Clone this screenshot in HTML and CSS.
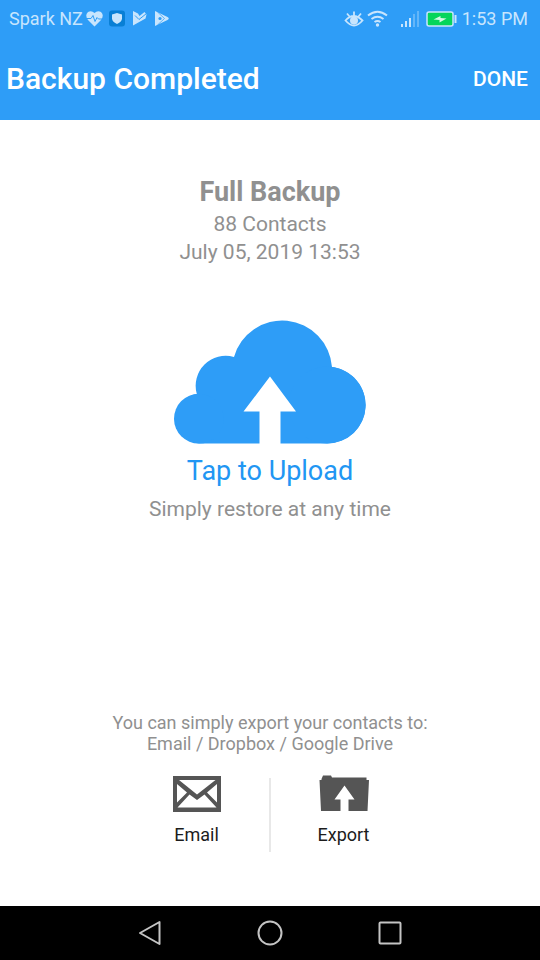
FILE: index.html
```html
<!DOCTYPE html>
<html lang="en">
<head>
<meta charset="utf-8">
<meta name="viewport" content="width=device-width, initial-scale=1">
<title>Backup Completed</title>
<link rel="stylesheet" href="styles.css">
</head>
<body>
<div class="status">
  <div class="status-group">
    <span>Spark NZ</span>
    <svg width="84" height="20" viewBox="85 9 84 20" fill="currentColor" aria-hidden="true">
      <path d="M94.500 26.500 L88 20 Q84.500 15 88 12 Q91.500 10 94.500 13 Q97.500 10 101 12 Q104.500 15 101 20Z"/>
      <path class="pulse" d="M86 18.500h5l2-3 2 6 2-4 1.500 1.500h4"/>
      <rect class="badge" x="109" y="10.500" width="16" height="16" rx="3"/>
      <path d="M117 13l5 1.500v4q0 3-5 5.500q-5-2.500-5-5.500v-4z"/>
      <path d="M133 11l5 2.500 1.500 2.500 5-4 2 2.500-1 4-12.500 7z"/>
      <path class="tick" d="M135 15.500l4 4L146.500 13.500"/>
      <path d="M155 11l12.500 6q2.500 1.500 0 3l-12.500 6z"/>
      <path class="play-cut" d="M157.500 12l7 6.500-7 6.500"/>
      <circle class="play-hole" cx="160" cy="18.500" r="1.600"/>
    </svg>
  </div>
  <div class="status-group">
    <svg width="113" height="22" viewBox="345 7 113 22" fill="none" stroke="currentColor" stroke-width="1.800" aria-hidden="true">
      <path d="M345.500 19.500q8-9 17 0q-8.500 10-17 0zM354 10.500v4M347 12.500l2.500 3M361 12.500l-2.500 3"/>
      <circle cx="354" cy="19.500" r="4" fill="currentColor" stroke="none"/>
      <path stroke-width="2" d="M368 14.500q9.500-7.500 19 0M371.500 18q6-4.500 12 0M374.500 21q3-2 6 0"/>
      <circle cx="377.500" cy="24" r="1.700" fill="currentColor" stroke="none"/>
      <path stroke-width="2" d="M402 26v-3M406 26v-6M410 26v-9"/>
      <path stroke-width="2" opacity=".35" d="M414 26V13M418 26V10"/>
      <rect class="cell" x="427" y="11" width="26" height="14" rx="2" stroke-width="1.500"/>
      <path stroke-width="2" d="M455.500 14v8"/>
      <path class="bolt" d="M433.500 18.500l7-3.500v2l6 .5-7 4v-2.500z"/>
    </svg>
    <span>1:53 PM</span>
  </div>
</div>
<header class="header">
  <h1 class="title">Backup Completed</h1>
  <button class="done" type="button">DONE</button>
</header>
<main class="main">
  <section class="summary">
    <h2 class="name">Full Backup</h2>
    <p>88 Contacts</p>
    <p>July 05, 2019 13:53</p>
  </section>
  <button class="upload" type="button">
    <svg width="192" height="124" viewBox="174 320 192 124" aria-hidden="true">
      <path fill="#2e9df7" d="M199 443.500A24.900 24.900 0 0 1 196.800 394A30 30 0 0 1 234 357A50 50 0 0 1 332 367A38.400 38.400 0 0 1 327 443.500Z"/>
      <circle fill="#2e9df7" cx="198.900" cy="418.700" r="24.900"/>
      <circle fill="#2e9df7" cx="327.100" cy="405" r="38.500"/>
      <path fill="#fff" d="M270 376.500L296 411.500H280.500V444H259.500V411.500H243.500Z"/>
    </svg>
    <span class="upload-label">Tap to Upload</span>
    <span class="upload-note">Simply restore at any time</span>
  </button>
  <section class="share">
    <p>You can simply export your contacts to:<br>Email / Dropbox / Google Drive</p>
    <div class="options">
      <button class="option" type="button">
        <svg width="50" height="40" viewBox="172 774 50 40" aria-hidden="true">
          <path fill="#555" d="M173 776h48v36h-48z"/>
          <path fill="#fff" d="M179 780h36.500l-18.500 14.500zM177 784l10 8.500-10 10zM217 784v18.500l-10-10zM189.500 794.500l7.500 5.500 7.500-5.500 12 13h-39z"/>
        </svg>
        <span>Email</span>
      </button>
      <button class="option" type="button">
        <svg width="50" height="40" viewBox="317 774 50 40" aria-hidden="true">
          <path fill="#555" d="M319.500 779l1.500-3.500h8l1 2h34.500v2.500h2.500l-1.500 31h-46.500l-1.500-31h2z"/>
          <path fill="#fff" d="M342.500 785.500l10 14h-6V811h-8v-11.500h-6z"/>
        </svg>
        <span>Export</span>
      </button>
    </div>
  </section>
</main>
<nav class="nav" aria-label="System">
  <button type="button" aria-label="Back"><svg width="28" height="28" viewBox="0 0 28 28"><path d="M4 14L23.500 3v22z"/></svg></button>
  <button type="button" aria-label="Home"><svg width="28" height="28" viewBox="0 0 28 28"><circle cx="14" cy="14" r="11.500"/></svg></button>
  <button type="button" aria-label="Recent apps"><svg width="28" height="28" viewBox="0 0 28 28"><rect x="3.500" y="3.500" width="21" height="21" rx="1"/></svg></button>
</nav>
</body>
</html>
```
FILE: styles.css
```css
* { box-sizing: border-box; }
body {
  margin: 0;
  min-height: 100vh;
  display: flex;
  flex-direction: column;
  background: #fff;
  color: #909090;
  font-family: Roboto, "Liberation Sans", sans-serif;
}
h1, h2, p { margin: 0; }
button {
  padding: 0;
  border: 0;
  background: none;
  color: inherit;
  font: inherit;
  cursor: pointer;
}
svg { display: block; overflow: visible; }

.status {
  display: flex;
  justify-content: space-between;
  align-items: center;
  height: 37px;
  padding: 0 12px 0 9px;
  background: #2e9df7;
  color: #c8e5fd;
  font-size: 18px;
}
.status-group { display: flex; align-items: center; gap: 2px; }
.status-group + .status-group { gap: 4px; }
.pulse { fill: none; stroke: #2e9df7; stroke-width: 1; }
.tick { fill: none; stroke: #2e9df7; stroke-width: 1; }
.play-cut { fill: none; stroke: #2e9df7; stroke-width: 0.7; }
.play-hole { fill: #2e9df7; }
.badge { fill: #087fd5; }
.cell { fill: #05d55b; }
.bolt { fill: #d5f8e5; stroke: none; }

.header {
  display: flex;
  justify-content: space-between;
  align-items: center;
  height: 83px;
  padding: 0 12px 0 6px;
  background: #2e9df7;
  color: #fff;
}
.title { font-size: 30px; font-weight: 500; }
.done { font-size: 21px; font-weight: 500; }

.main {
  flex: 1;
  display: flex;
  flex-direction: column;
  align-items: center;
  padding: 54px 16px;
  text-align: center;
}
.summary { font-size: 21px; line-height: 28px; }
.name { font-size: 27px; font-weight: 700; line-height: 36px; }
.upload {
  display: flex;
  flex-direction: column;
  align-items: center;
  margin-top: 54px;
}
.upload-label { color: #2196f3; font-size: 27px; line-height: 36px; margin-top: 9px; }
.upload-note { font-size: 21px; line-height: 28px; margin-top: 6px; }
.share {
  margin-top: auto;
  font-size: 18px;
  line-height: 21px;
}
.options { display: flex; justify-content: center; margin-top: 24px; }
.option {
  display: flex;
  flex-direction: column;
  align-items: center;
  gap: 10px;
  width: 146px;
  height: 74px;
  color: #1c1c1c;
}
.option svg { margin-top: -4px; }
.option:first-child {
  width: 147px;
  border-right: 2px solid #e8e8e8;
}
.option:last-child { width: 145px; }

.nav {
  display: flex;
  justify-content: center;
  align-items: center;
  gap: 92px;
  height: 54px;
  background: #000;
}
.nav svg { fill: none; stroke: #c4c4c4; stroke-width: 2; stroke-linejoin: round; }
```
